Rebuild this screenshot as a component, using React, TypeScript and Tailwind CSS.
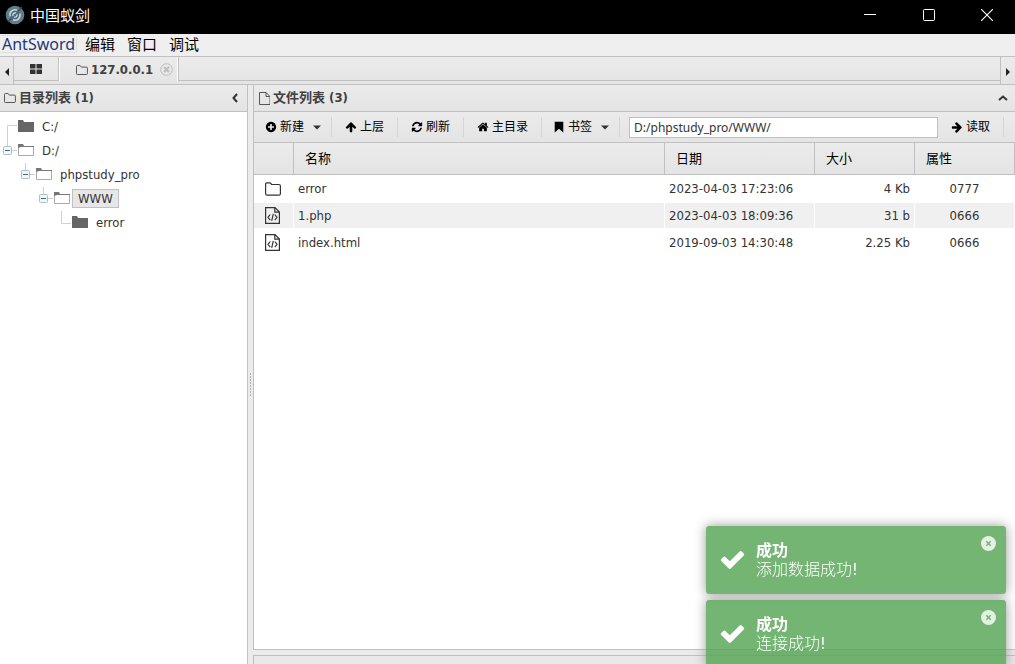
import type { ReactNode } from "react";

const ICONS = {
  plus: "M1344 960v-128q0-26-19-45t-45-19h-256v-256q0-26-19-45t-45-19h-128q-26 0-45 19t-19 45v256h-256q-26 0-45 19t-19 45v128q0 26 19 45t45 19h256v256q0 26 19 45t45 19h128q26 0 45-19t19-45v-256h256q26 0 45-19t19-45zm320-64q0 209-103 385.5t-279.5 279.5-385.5 103-385.5-103-279.5-279.5-103-385.5 103-385.5 279.5-279.5 385.5-103 385.5 103 279.5 279.5 103 385.5z",
  up: "M1675 971q0 51-37 90l-75 75q-38 38-91 38-54 0-90-38l-294-293v704q0 52-37.5 84.5t-90.5 32.5h-128q-53 0-90.5-32.5t-37.5-84.5v-704l-294 293q-36 38-90 38t-90-38l-75-75q-38-38-38-90 0-53 38-91l651-651q35-37 90-37 54 0 91 37l651 651q37 39 37 91z",
  refresh:
    "M1639 1056q0 5-1 7-64 268-268 434.5t-478 166.5q-146 0-282.5-55t-243.5-157l-129 129q-19 19-45 19t-45-19-19-45v-448q0-26 19-45t45-19h448q26 0 45 19t19 45-19 45l-137 137q71 66 161 102t187 36q134 0 250-65t186-179q11-17 53-117 8-23 30-23h192q13 0 22.5 9.5t9.5 22.5zm25-800v448q0 26-19 45t-45 19h-448q-26 0-45-19t-19-45 19-45l138-138q-148-137-349-137-134 0-250 65t-186 179q-11 17-53 117-8 23-30 23h-199q-13 0-22.5-9.5t-9.5-22.5v-7q65-268 270-434.5t480-166.5q146 0 284 55.5t245 156.5l130-129q19-19 45-19t45 19 19 45z",
  home: "M1472 992v480q0 26-19 45t-45 19h-384v-384h-256v384h-384q-26 0-45-19t-19-45v-480q0-1 .5-3t.5-3l575-474 575 474q1 2 1 6zm223-69l-62 74q-8 9-21 11h-3q-13 0-21-7l-692-577-692 577q-12 8-24 7-13-2-21-11l-62-74q-8-10-7-23.5t11-21.5l719-599q32-26 76-26t76 26l244 204v-195q0-14 9-23t23-9h192q14 0 23 9t9 23v408l219 182q10 8 11 21.5t-7 23.5z",
  bookmark: "M256 128h1280v1600l-640-560-640 560z",
  right:
    "M1600 960q0 54-37 91l-651 651q-39 37-91 37-51 0-90-37l-75-75q-38-38-38-91t38-91l293-293h-704q-52 0-84.5-37.5t-32.5-90.5v-128q0-53 32.5-90.5t84.5-37.5h704l-293-294q-38-36-38-90t38-90l75-75q38-38 90-38 53 0 91 38l651 651q37 35 37 90z",
  check:
    "M1671 566q0 40-28 68l-724 724-136 136q-28 28-68 28t-68-28l-136-136-362-362q-28-28-28-68t28-68l136-136q28-28 68-28t68 28l294 295 656-657q28-28 68-28t68 28l136 136q28 28 28 68z",
};

function Icon({ name, className = "size-3" }: { name: keyof typeof ICONS; className?: string }) {
  return (
    <svg viewBox="0 0 1792 1792" fill="currentColor" className={`shrink-0 ${className}`} aria-hidden="true">
      <path d={ICONS[name]} />
    </svg>
  );
}

function Logo() {
  return (
    <svg viewBox="0 0 20 20" className="mb-1 size-5 shrink-0" aria-hidden="true">
      <circle cx="10" cy="10" r="9.3" fill="#607d8b" />
      <path d="M3 17 17 2" stroke="#33454f" strokeWidth="1.2" />
      <circle cx="10" cy="10" r="5.6" fill="#50697a" />
      <path d="M5.2 11.5A5 5 0 0 1 12 5.3M14.8 8.5A5 5 0 0 1 8 14.7" fill="none" stroke="#c9d8df" strokeWidth="1.5" />
      <path d="M8 11a2.3 2.3 0 0 1 3-3M12 9.3a2.3 2.3 0 0 1-3 2.8" fill="none" stroke="#e0eaee" strokeWidth="1.2" />
    </svg>
  );
}

function SmallFolder() {
  return (
    <svg viewBox="0 0 12 10" className="h-[10px] w-3 shrink-0" fill="none" stroke="#555" aria-hidden="true">
      <path d="M.5 8V1.5q0-1 1-1h2.6l1.3 1.6h5q1 0 1 1V8.500q0 1-1 1h-9q-1 0-1-1z" />
    </svg>
  );
}

function SmallPage() {
  return (
    <svg viewBox="0 0 11 13" className="h-[13px] w-[11px] shrink-0" fill="none" stroke="#555" aria-hidden="true">
      <path d="M.5.5h6.500l4 4v8H.5zM7 .5v4h4" />
    </svg>
  );
}

function Caret() {
  return (
    <svg viewBox="0 0 8 5" className="h-[5px] w-2 shrink-0" fill="#333" aria-hidden="true">
      <path d="M0 .5h8l-4 4z" />
    </svg>
  );
}

function RowFolder() {
  return (
    <svg viewBox="0 0 16 14" className="h-[14px] w-4" fill="none" stroke="#333" strokeWidth="1.2" aria-hidden="true">
      <path d="M.6 11.500V1.900Q.6.800 1.700.800h3.500l1.400 1.700h7.300q1.500 0 1.500 1.500v7.700q0 1.500-1.500 1.500H2.100Q.6 13.200.6 11.500z" />
    </svg>
  );
}

function RowCode() {
  return (
    <svg viewBox="0 0 15 17" className="h-[17px] w-[15px]" fill="none" stroke="#333" strokeWidth="1.200" aria-hidden="true">
      <path d="M.6.600h9.400l4.400 4.400v11.400H.6zM9.800.8v4.400h4.400M5.200 7.500 3 10.300l2.200 2.800M9.800 7.500l2.200 2.800-2.200 2.800M8.300 6.800l-1.600 7" />
    </svg>
  );
}

type Node = { label: string; depth: number; kind: "first" | "minus" | "last"; selected?: boolean };

const NODES: Node[] = [
  { label: "C:/", depth: 0, kind: "first" },
  { label: "D:/", depth: 0, kind: "minus" },
  { label: "phpstudy_pro", depth: 1, kind: "minus" },
  { label: "WWW", depth: 2, kind: "minus", selected: true },
  { label: "error", depth: 3, kind: "last" },
];

function Connector({ kind }: { kind: Node["kind"] }) {
  const line =
    kind === "first" ? "M17 10.500H7.500V24" : kind === "last" ? "M7.500 0V12.500H17" : "M7.500 0V7M12 11.500H17";
  return (
    <svg viewBox="0 0 18 24" className="h-6 w-[18px] shrink-0" fill="none" aria-hidden="true">
      <path d={line} stroke="#d0d0d0" />
      {kind === "minus" && (
        <>
          <rect x="3.500" y="7.500" width="8" height="8" rx="1" fill="#f0f6f9" stroke="#a9bfca" />
          <path d="M5 11.500h5" stroke="#456a7c" />
        </>
      )}
    </svg>
  );
}

function TreeFolder({ open }: { open: boolean }) {
  return (
    <svg viewBox="0 0 18 24" className="h-6 w-[18px] shrink-0" aria-hidden="true">
      {open ? (
        <>
          <path d="M.5 16.500v-9h15v9z" fill="#fff" stroke="#aaa" />
          <path d="M0 9V5h5l1 2h10v1H3z" fill="#777" />
        </>
      ) : (
        <path d="M0 17V5h5l1 2h10v10z" fill="#666" />
      )}
    </svg>
  );
}

function ToolButton({ icon, children, menu }: { icon: keyof typeof ICONS; children: ReactNode; menu?: boolean }) {
  return (
    <button
      type="button"
      className={`flex h-5 shrink-0 items-center gap-[3px] border-r border-[#c5dce3] text-xs text-black ${menu ? "pr-[10px] pl-[11px]" : "px-[13px]"}`}
    >
      <Icon name={icon} />
      <span>{children}</span>
      {menu && (
        <span className="pl-[6px]">
          <Caret />
        </span>
      )}
    </button>
  );
}

const FILES = [
  { name: "error", date: "2023-04-03 17:23:06", size: "4 Kb", attr: "0777", dir: true },
  { name: "1.php", date: "2023-04-03 18:09:36", size: "31 b", attr: "0666", dir: false },
  { name: "index.html", date: "2019-09-03 14:30:48", size: "2.25 Kb", attr: "0666", dir: false },
];

const PANEL_HEAD =
  "flex h-[27px] shrink-0 items-center border-b border-[#c0c0c0] bg-linear-to-b from-[#ebebeb] to-[#e4e4e4] font-bold text-[#404040]";

function Toast({ text }: { text: string }) {
  return (
    <div
      role="status"
      className="flex h-[68px] items-center rounded-[3px] bg-[#51a351]/80 pr-[10px] pl-[13px] text-base leading-[19px] text-white shadow-[0_0_12px_#999]"
    >
      <Icon name="check" className="mb-[2px] size-[27px]" />
      <div className="grow pl-[10px]">
        <div className="font-bold">成功</div>
        <div className="font-light">{text}</div>
      </div>
      <button type="button" aria-label="关闭" className="mt-[10px] self-start">
        <svg viewBox="0 0 15 15" className="size-[15px]" aria-hidden="true">
          <circle cx="7.500" cy="7.500" r="7.500" fill="#e3f0e3" />
          <path d="M5.300 5.300l4.400 4.400M9.700 5.300l-4.400 4.400" stroke="#73b573" strokeWidth="1.500" />
        </svg>
      </button>
    </div>
  );
}

export default function App() {
  return (
    <div className="flex h-screen flex-col overflow-hidden bg-[#ebebeb] font-['DejaVu_Sans_Condensed','Noto_Sans_CJK_SC',sans-serif] text-[13px] leading-[18px] text-[#333]">
      <header className="flex h-[34px] shrink-0 items-center bg-black pl-[5px] text-white">
        <Logo />
        <h1 className="grow pb-1 pl-[5px] font-['Noto_Sans_CJK_SC',sans-serif] text-[15px]">中国蚁剑</h1>
        <button type="button" aria-label="最小化" className="flex h-full w-[58px] items-center justify-center">
          <svg viewBox="0 0 12 12" className="mb-1 size-3" stroke="#fff" aria-hidden="true">
            <path d="M0 5.500h12" />
          </svg>
        </button>
        <button type="button" aria-label="最大化" className="flex h-full w-[60px] items-center justify-center">
          <svg viewBox="0 0 12 12" className="mb-1 size-3" fill="none" stroke="#fff" aria-hidden="true">
            <rect x=".5" y=".5" width="11" height="11" rx="1" />
          </svg>
        </button>
        <button type="button" aria-label="关闭窗口" className="flex h-full w-14 items-center justify-center">
          <svg viewBox="0 0 12 12" className="mb-1 size-3" stroke="#fff" strokeWidth="1.100" aria-hidden="true">
            <path d="M0 0l12 12M12 0 0 12" />
          </svg>
        </button>
      </header>

      <nav className="flex h-[23px] shrink-0 items-center border-b border-[#c0c0c0] bg-[#efefef] pb-[2px] font-['Noto_Sans','Noto_Sans_CJK_SC',sans-serif] text-[15px] leading-5 text-black">
        <button type="button" className="h-[18px] rounded-[2px] border border-l-0 border-[#e0e0e0] pr-px pl-[2px] text-base leading-4 text-[#1c3a78]">
          AntSword
        </button>
        <button type="button" className="pl-2">编辑</button>
        <button type="button" className="pl-3">窗口</button>
        <button type="button" className="pl-3">调试</button>
      </nav>

      <div className="flex h-7 shrink-0 border-b border-[#c0c0c0] bg-linear-to-b from-[#ebebeb] to-[#e4e4e4]">
        <button type="button" aria-label="向左滚动" className="flex w-[14px] items-center justify-center border-r border-[#c0c0c0]">
          <svg viewBox="0 0 4 8" className="mt-[2px] h-2 w-1" fill="#222" aria-hidden="true">
            <path d="M4 0v8L0 4z" />
          </svg>
        </button>
        <div className="flex h-6 grow">
          <button type="button" aria-label="主页" className="flex w-[45px] items-center justify-center border-r border-b border-[#c0c0c0]">
            <svg viewBox="0 0 12 10" className="h-[10px] w-3" fill="#333" aria-hidden="true">
              <path d="M0 0h5.500v4.500H0zM6.500 0H12v4.500H6.500zM0 5.500h5.500V10H0zM6.500 5.500H12V10H6.500z" />
            </svg>
          </button>
          <button type="button" className="flex items-center border-x border-white pt-px pr-1 pl-4 font-bold text-[#404040]">
            <SmallFolder />
            <span className="pr-[7px] pl-[3px]">127.0.0.1</span>
            <svg viewBox="0 0 13 13" className="size-[13px]" fill="none" stroke="#bdbdbd" aria-hidden="true">
              <circle cx="6.500" cy="6.500" r="5.800" />
              <path d="M4 4l5 5M9 4 4 9" strokeWidth="1.800" />
            </svg>
          </button>
          <div className="grow border-b border-l border-[#c0c0c0]" />
        </div>
        <button type="button" aria-label="向右滚动" className="flex w-[15px] items-center justify-center border-l border-[#c0c0c0]">
          <svg viewBox="0 0 4 8" className="mt-[2px] h-2 w-1" fill="#222" aria-hidden="true">
            <path d="M0 0v8l4-4z" />
          </svg>
        </button>
      </div>

      <div className="flex min-h-0 grow">
        <aside className="flex w-[248px] shrink-0 flex-col border-r border-[#c0c0c0] bg-white">
          <div className={PANEL_HEAD}>
            <div className="flex grow items-center gap-[3px] pl-1">
              <SmallFolder />
              <h2>目录列表 (1)</h2>
            </div>
            <button type="button" aria-label="折叠目录" className="pr-[9px]">
              <svg viewBox="0 0 6 10" className="h-[10px] w-[6px]" fill="none" stroke="#333" strokeWidth="2" aria-hidden="true">
                <path d="M5 1 1.500 5 5 9" />
              </svg>
            </button>
          </div>
          <ul className="pt-[3px]">
            {NODES.map((n) => (
              <li key={n.label + n.depth} className="flex h-6 items-start" style={{ paddingLeft: n.depth * 18 }}>
                <Connector kind={n.kind} />
                <TreeFolder open={n.kind === "minus"} />
                <button
                  type="button"
                  className={`mt-[2px] h-[19px] border px-[5px] leading-[17px] ${n.selected ? "border-[#c0c0c0] bg-[#e7e7e7]" : "border-transparent"}`}
                >
                  {n.label}
                </button>
              </li>
            ))}
          </ul>
        </aside>

        <div className="flex w-[5px] shrink-0 items-center justify-center">
          <svg viewBox="0 0 1 24" className="mt-5 h-6 w-px" stroke="#b5b5b5" aria-hidden="true">
            <path d="M.5 0v24" strokeDasharray="2 1" />
          </svg>
        </div>

        <main className="flex min-w-0 grow flex-col">
          <section className="flex min-h-0 grow flex-col border-b border-l border-[#c0c0c0] bg-white">
            <div className={PANEL_HEAD}>
              <div className="flex grow items-center gap-[3px] pl-[5px]">
                <SmallPage />
                <h2>文件列表 (3)</h2>
              </div>
              <button type="button" aria-label="折叠文件列表" className="pr-[7px]">
                <svg viewBox="0 0 10 6" className="h-[6px] w-[10px]" fill="none" stroke="#333" strokeWidth="2" aria-hidden="true">
                  <path d="M1 5l4-3.500L9 5" />
                </svg>
              </button>
            </div>

            <div className="flex h-[31px] shrink-0 items-center border-b border-[#c0c0c0] bg-linear-to-b from-[#ebebeb] to-[#e4e4e4] pr-[11px]">
              <ToolButton icon="plus" menu>新建</ToolButton>
              <ToolButton icon="up">上层</ToolButton>
              <ToolButton icon="refresh">刷新</ToolButton>
              <ToolButton icon="home">主目录</ToolButton>
              <ToolButton icon="bookmark" menu>书签</ToolButton>
              <input
                type="text"
                aria-label="路径"
                defaultValue="D:/phpstudy_pro/WWW/"
                className="ml-[9px] h-[21px] min-w-0 grow border border-[#c0c0c0] bg-white px-1 font-['Noto_Sans',sans-serif] text-xs text-[#333] outline-none"
              />
              <ToolButton icon="right">读取</ToolButton>
            </div>

            <table className="w-full table-fixed border-separate border-spacing-0">
              <colgroup>
                <col className="w-10" />
                <col />
                <col className="w-[150px]" />
                <col className="w-[100px]" />
                <col className="w-[100px]" />
              </colgroup>
              <thead>
                <tr className="h-8 bg-linear-to-b from-[#ebebeb] to-[#e4e4e4] text-left text-black">
                  {["", "名称", "日期", "大小", "属性"].map((h, i) => (
                    <th key={i} scope="col" className="border-r border-b border-[#c0c0c0] px-[11px] py-0 font-normal">
                      {h}
                    </th>
                  ))}
                </tr>
              </thead>
              <tbody>
                {FILES.map((f, i) => (
                  <tr
                    key={f.name}
                    className={`h-[27px] *:border-y *:border-r *:border-white *:py-0 ${i === 1 ? "*:bg-[#f0f0f0]" : ""}`}
                  >
                    <td>
                      <div className="flex pl-[11px]">{f.dir ? <RowFolder /> : <RowCode />}</div>
                    </td>
                    <td className="px-1">{f.name}</td>
                    <td className="px-1">{f.date}</td>
                    <td className="px-1 text-right">{f.size}</td>
                    <td className="px-1 text-center">{f.attr}</td>
                  </tr>
                ))}
              </tbody>
            </table>
          </section>
          <div className="mt-[5px] h-[9px] shrink-0 border-t border-l border-[#c0c0c0] bg-[#e9e9e9]" />
        </main>
      </div>

      <div className="fixed right-[9px] -bottom-1 flex w-[300px] flex-col gap-[6px]">
        <Toast text="添加数据成功!" />
        <Toast text="连接成功!" />
      </div>
    </div>
  );
}
